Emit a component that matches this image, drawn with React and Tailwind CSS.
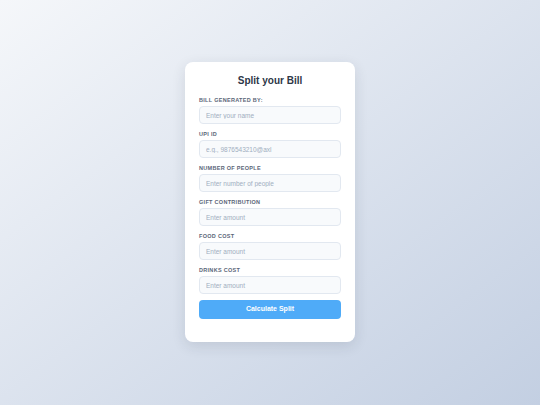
const fields = [
  { label: "Bill Generated By:", placeholder: "Enter your name" },
  { label: "UPI ID", placeholder: "e.g., 9876543210@axl" },
  { label: "Number of People", placeholder: "Enter number of people" },
  { label: "Gift Contribution", placeholder: "Enter amount" },
  { label: "Food Cost", placeholder: "Enter amount" },
  { label: "Drinks Cost", placeholder: "Enter amount" },
];

export default function App() {
  return (
    <div
      className="min-h-[405px] w-full flex items-start justify-center pt-[62px] bg-gradient-to-br from-[#f5f7fa] to-[#c3cfe2]"
      style={{ fontFamily: '"Liberation Sans", Arial, sans-serif' }}
    >
      <div className="w-[170px] bg-white rounded-[8px] shadow-[0_4px_14px_rgba(30,41,59,0.12)] px-[14px] pt-[11px] pb-[23px]">
        <h1 className="text-[10px] leading-[16px] font-bold text-[#2d3748] text-center mb-[7px]">
          Split your Bill
        </h1>

        <form className="flex flex-col gap-[6px]">
          {fields.map((f) => (
            <div key={f.label} className="flex flex-col">
              <label className="text-[5.5px] leading-[8px] font-bold uppercase tracking-[0.3px] text-[#5a6578] mb-[2px]">
                {f.label}
              </label>
              <input
                type="text"
                placeholder={f.placeholder}
                className="h-[18px] w-full rounded-[4px] border border-[#e2e8f0] bg-[#f8fafc] px-[6px] text-[6.5px] text-[#2d3748] placeholder:text-[#a0aec0] outline-none"
              />
            </div>
          ))}

          <button
            type="button"
            className="h-[19px] w-full rounded-[4px] bg-[#4fabf8] text-white text-[7px] font-bold"
          >
            Calculate Split
          </button>
        </form>
      </div>
    </div>
  );
}
